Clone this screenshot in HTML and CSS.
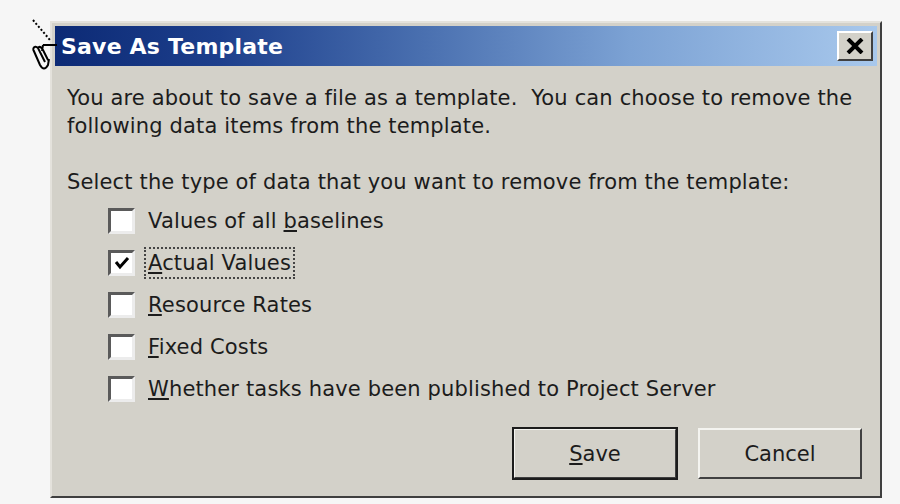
FILE: index.html
```html
<!DOCTYPE html>
<html lang="en">
  <head>
    <meta charset="UTF-8" />
    <title>Save As Template</title>
    <link rel="stylesheet" href="styles.css">
  </head>
  <body>
    <div class="dialog">
      <div class="titlebar">
        <span class="title">Save As Template</span>
        <button class="close" type="button" aria-label="Close">
          <svg width="18" height="16" viewBox="0 0 18 16">
            <path d="M2 1 L16 15 M16 1 L2 15" stroke="#000" stroke-width="4" fill="none" />
          </svg>
        </button>
      </div>
      <div class="content">
        <p class="intro">You are about to save a file as a template.&nbsp; You can choose to remove the following data items from the template.</p>
        <p class="prompt">Select the type of data that you want to remove from the template:</p>
        <ul class="options">
          <li><span class="box"></span><span class="label">Values of all <u>b</u>aselines</span></li>
          <li><span class="box checked">
            <svg width="16" height="14" viewBox="0 0 16 14">
              <path d="M2 6 L6 11 L14 2" stroke="#000" stroke-width="3" fill="none" />
            </svg>
          </span><span class="label focus"><u>A</u>ctual Values</span></li>
          <li><span class="box"></span><span class="label"><u>R</u>esource Rates</span></li>
          <li><span class="box"></span><span class="label"><u>F</u>ixed Costs</span></li>
          <li><span class="box"></span><span class="label"><u>W</u>hether tasks have been published to Project Server</span></li>
        </ul>
        <div class="buttons">
          <button class="btn default" type="button"><u>S</u>ave</button>
          <button class="btn" type="button">Cancel</button>
        </div>
      </div>
    </div>

    <!-- mouse pointer over the corner -->
    <svg class="cursor" width="34" height="60" viewBox="0 0 34 60">
      <path d="M8 5 L25 25" stroke="#000" stroke-width="2" stroke-dasharray="2 2" fill="none" />
      <path d="M18 30 L32 30 M18 30 L17 36 M8 34 Q10 30 13 33 L20 47 M13 33 Q15 30 18 35 L23 45 M8 34 L15 50 Q19 57 23 50 L24 44" stroke="#000" stroke-width="2" fill="none" />
    </svg>
  </body>
</html>
```

FILE: styles.css
```css
body {
  margin: 0;
  background: #f6f6f6;
  font-family: "DejaVu Sans", sans-serif;
}
.dialog {
  box-sizing: border-box;
  width: 832px;
  height: 477px;
  margin: 21px 0 0 50px;
  padding: 3px;
  background: #d3d1c9;
  border: 2px solid;
  border-color: #e4e2dc #3f3f3f #3f3f3f #e4e2dc;
  display: flex;
  flex-direction: column;
}
.titlebar {
  height: 40px;
  display: flex;
  align-items: center;
  justify-content: space-between;
  padding: 0 4px 0 6px;
  background: linear-gradient(to right, #0c2a75 0%, #1d3f8c 20%, #4a70b0 45%, #7ca2d4 70%, #a8c8ec 100%);
}
.title {
  color: #fff;
  font-weight: bold;
  font-size: 22px;
  letter-spacing: 0.2px;
}
.close {
  width: 36px;
  height: 30px;
  padding: 0;
  background: #d3d1c9;
  border: 2px solid;
  border-color: #fff #404040 #404040 #fff;
  display: flex;
  align-items: center;
  justify-content: center;
}
.content {
  flex: 1;
  display: flex;
  flex-direction: column;
  padding: 18px 12px 14px 12px;
  color: #1c1c1c;
  font-size: 21px;
  letter-spacing: 0.15px;
}
.intro {
  margin: 0;
  line-height: 28px;
}
.prompt {
  margin: 28px 0 4px 0;
  line-height: 28px;
}
.options {
  list-style: none;
  margin: 0;
  padding: 0 0 0 41px;
}
.options li {
  height: 42px;
  display: flex;
  align-items: center;
  gap: 13px;
}
.box {
  box-sizing: border-box;
  width: 27px;
  height: 26px;
  background: #fff;
  border: 3px solid;
  border-color: #5a5a5a #ececec #ececec #5a5a5a;
  display: flex;
  align-items: center;
  justify-content: center;
}
.label {
  padding: 2px 2px;
  border: 2px dotted transparent;
  margin-left: -4px;
}
.label.focus {
  border-color: #444;
}
.buttons {
  margin-top: auto;
  display: flex;
  justify-content: flex-end;
  gap: 21px;
  padding-right: 3px;
}
.btn {
  width: 164px;
  height: 51px;
  background: #d3d1c9;
  font-family: inherit;
  font-size: 21px;
  color: #1c1c1c;
  border: 2px solid;
  border-color: #f4f4f0 #404040 #404040 #f4f4f0;
}
.btn.default {
  outline: 2px solid #1c1c1c;
  outline-offset: -1px;
}
.cursor {
  position: absolute;
  left: 25px;
  top: 15px;
}
```
